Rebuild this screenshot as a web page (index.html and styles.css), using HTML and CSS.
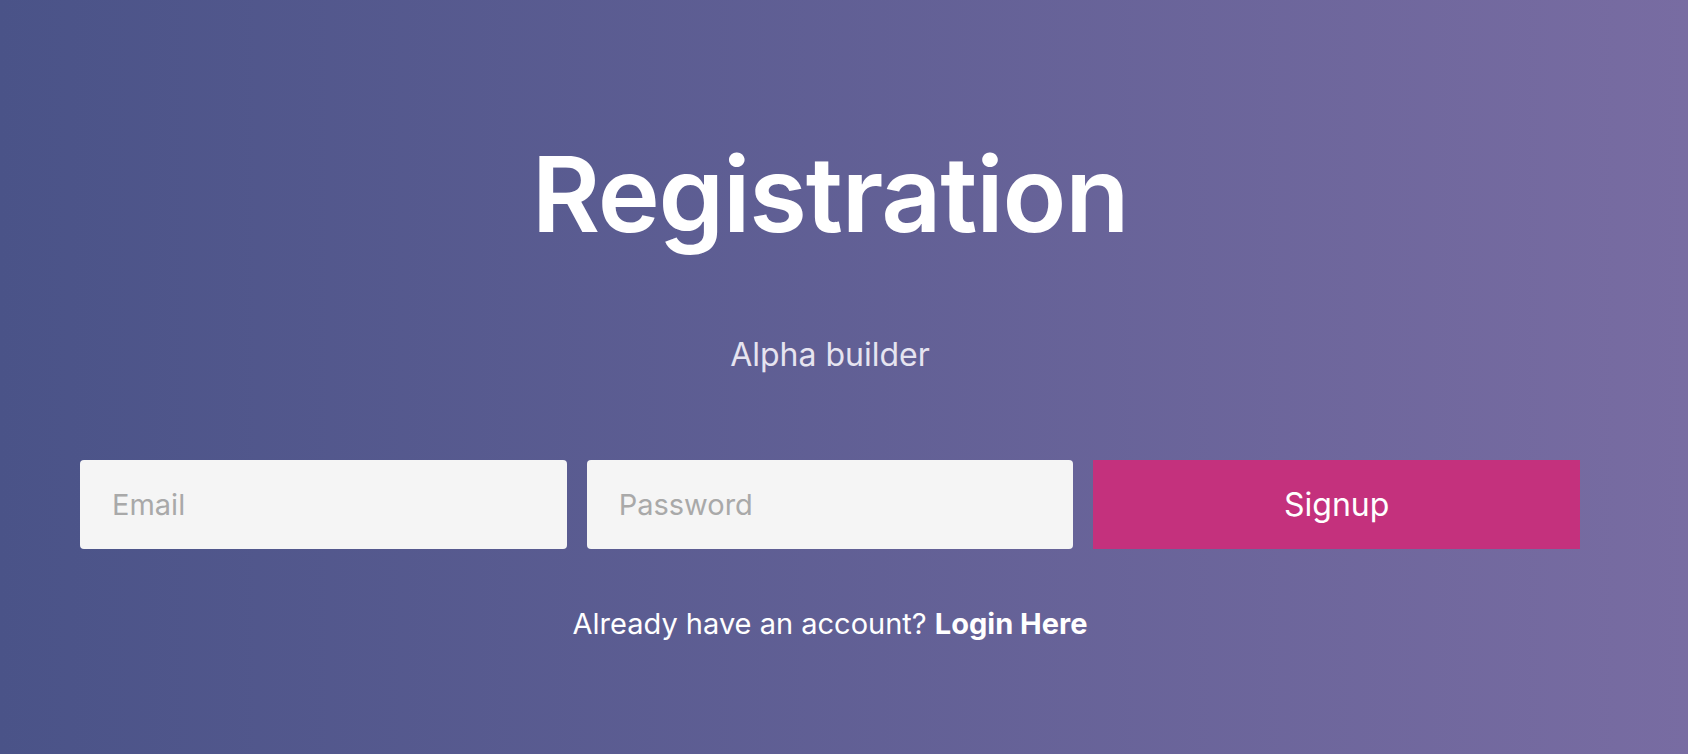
FILE: index.html
```html
<!DOCTYPE html>
<html lang="en">
<head>
<meta charset="utf-8">
<title>Registration</title>
<link rel="stylesheet" href="styles.css">
</head>
<body>
<main class="page">
  <h1 class="title">Registration</h1>
  <p class="subtitle">Alpha builder</p>
  <form class="form">
    <input class="field" type="email" placeholder="Email">
    <input class="field" type="password" placeholder="Password">
    <button class="signup" type="button">Signup</button>
  </form>
  <p class="login">Already have an account? <strong>Login Here</strong></p>
</main>
</body>
</html>
```
FILE: styles.css
```css
html, body {
  margin: 0;
  height: 100%;
}
body {
  background: linear-gradient(to right, #4a5388, #786ca2);
  font-family: Inter, "Noto Sans", sans-serif;
  color: #fff;
  overflow: hidden;
}
.page {
  box-sizing: border-box;
  height: 754px;
  padding: 129px 108px 0 80px;
  display: flex;
  flex-direction: column;
  align-items: center;
}
.title {
  margin: 0;
  font-size: 105px;
  font-weight: 600;
  line-height: 130px;
  letter-spacing: -1.2px;
}
.subtitle {
  margin: 76px 0 0;
  font-size: 32px;
  line-height: 40px;
  color: #e6e4f0;
}
.form {
  margin-top: 85px;
  width: 100%;
  display: grid;
  grid-template-columns: repeat(3, minmax(0, 1fr));
  gap: 20px;
}
.field {
  width: 100%;
  min-width: 0;
  height: 89px;
  border: 0;
  border-radius: 4px;
  background: #f5f5f5;
  padding: 0 32px;
  font-family: inherit;
  font-size: 29px;
  color: #333;
  outline: none;
  box-sizing: border-box;
}
.field::placeholder {
  color: #a9a9a9;
}
.signup {
  width: 100%;
  height: 89px;
  border: 0;
  background: #c4317d;
  color: #fff;
  font-family: inherit;
  font-size: 32px;
}
.login {
  margin: 57px 0 0;
  font-size: 29px;
  line-height: 36px;
}
.login strong {
  font-weight: 700;
}
```
